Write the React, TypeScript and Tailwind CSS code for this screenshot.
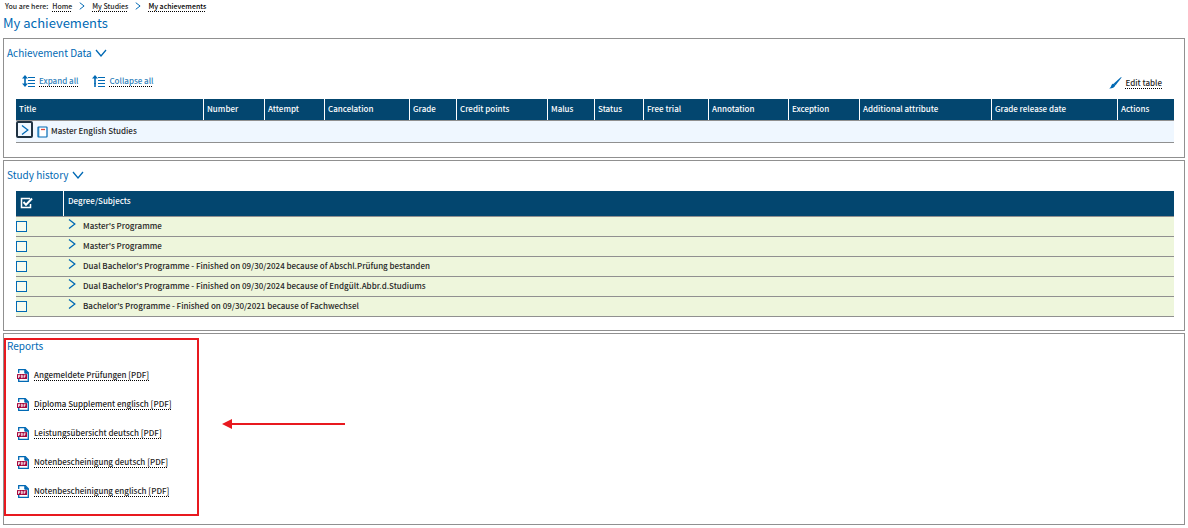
import type { ReactNode } from 'react'

const columns = [
  { label: 'Title', width: 'w-[188px]' },
  { label: 'Number', width: 'w-[61px]' },
  { label: 'Attempt', width: 'w-[60px]' },
  { label: 'Cancelation', width: 'w-[85px]' },
  { label: 'Grade', width: 'w-[47px]' },
  { label: 'Credit points', width: 'w-[91px]' },
  { label: 'Malus', width: 'w-[47px]' },
  { label: 'Status', width: 'w-[49px]' },
  { label: 'Free trial', width: 'w-[65px]' },
  { label: 'Annotation', width: 'w-[80px]' },
  { label: 'Exception', width: 'w-[71px]' },
  { label: 'Additional attribute', width: 'w-[132px]' },
  { label: 'Grade release date', width: 'w-[126px]' },
  { label: 'Actions', width: '' },
]

const history = [
  "Master's Programme",
  "Master's Programme",
  "Dual Bachelor's Programme - Finished on 09/30/2024 because of Abschl.Prüfung bestanden",
  "Dual Bachelor's Programme - Finished on 09/30/2024 because of Endgült.Abbr.d.Studiums",
  "Bachelor's Programme - Finished on 09/30/2021 because of Fachwechsel",
]

const reports = [
  'Angemeldete Prüfungen [PDF]',
  'Diploma Supplement englisch [PDF]',
  'Leistungsübersicht deutsch [PDF]',
  'Notenbescheinigung deutsch [PDF]',
  'Notenbescheinigung englisch [PDF]',
]

const dotted = 'underline decoration-dotted decoration-1 decoration-black underline-offset-2'

function ChevronRight({ className }: { className?: string }) {
  return (
    <svg viewBox="0 0 8 10" className={className} fill="none" stroke="#0069b4" strokeWidth="1.3" aria-hidden="true">
      <path d="M1 .6 6.8 5 1 9.4" />
    </svg>
  )
}

function ChevronDown() {
  return (
    <svg viewBox="0 0 12 8" className="w-3 h-2" fill="none" stroke="#0069b4" strokeWidth="1.3" aria-hidden="true">
      <path d="M1 1 6 7 11 1" />
    </svg>
  )
}

function RowsIcon({ both }: { both?: boolean }) {
  return (
    <svg viewBox="0 0 14 12" className="w-3.5 h-3" fill="#0069b4" aria-hidden="true">
      <path d="M3 0 6 3.600H0z" />
      <path d="M2.200 3h1.600v6H2.200z" />
      {both ? <path d="M0 8.400h6L3 12z" /> : <path d="M2.200 8h1.600v4H2.200z" />}
      <path d="M6 2h7v1H6zM6 5h7v1H6zM6 8h7v1H6zM6 11h7v1H6z" />
    </svg>
  )
}

function BookIcon() {
  return (
    <svg viewBox="0 0 11 12" className="w-[11px] h-3" aria-hidden="true">
      <rect x="1" y="1" width="9" height="10" rx="0.5" fill="#fff" stroke="#0069b4" strokeWidth="1.2" />
      <path d="M1.800 1v10" stroke="#0069b4" strokeWidth="0.800" />
      <path d="M4 3.500h4" stroke="#e2433a" strokeWidth="1.300" />
    </svg>
  )
}

function BrushIcon() {
  return (
    <svg viewBox="0 0 13 12" className="w-[13px] h-3" fill="#0069b4" aria-hidden="true">
      <path d="M12.800.2H11.800L4.800 6.400l1.800 1.800z" />
      <path d="M4.500 6.700c1.100.1 1.900.9 1.800 1.900C5.600 10.800 3 11.600.2 11.500c1.500-.7 1.800-1.900 2.200-3.200.4-1 1.100-1.700 2.100-1.600z" />
    </svg>
  )
}

function PdfIcon() {
  return (
    <svg viewBox="0 0 12 13" className="w-3 h-[13px]" aria-hidden="true">
      <path d="M1.700 4V.7h6.600l3 3v8.600H1.700V10" fill="#fff" stroke="#0069b4" strokeWidth="1.300" />
      <path d="M7.800.7v3.500h3.500" fill="#0069b4" stroke="#0069b4" />
      <rect y="5" width="10" height="5" rx="0.500" fill="#a5063c" />
      <path
        d="M1.500 9V6.200h1.200v1.500H1.500M4.400 6.200v2.500h.8l.5-.5V6.700l-.5-.5zM7.200 9V6.200h1.500M7.200 7.600h1.200"
        fill="none"
        stroke="#fff"
        strokeWidth="0.800"
      />
    </svg>
  )
}

function Panel({ className, children }: { className?: string; children: ReactNode }) {
  return <section className={`border border-[#909090] ${className}`}>{children}</section>
}

function PanelTitle({ children }: { children: ReactNode }) {
  return (
    <h2 className="text-[10px] leading-4 text-[#0069b4] font-normal">
      <button type="button" className="flex items-center gap-[3px]">
        {children}
        <ChevronDown />
      </button>
    </h2>
  )
}

export default function App() {
  return (
    <main className="bg-white px-[3px] font-['Noto_Sans_CJK_SC','Source_Sans_Pro',sans-serif] text-[8px] leading-3 font-medium text-[#262626]">
      <nav aria-label="Breadcrumb" className="flex items-center pl-0.5 h-3 text-[7px]">
        <span className="mr-1">You are here:</span>
        <a href="#home" className={dotted}>Home</a>
        <ChevronRight className="w-1.5 h-2 mx-[7px]" />
        <a href="#studies" className={dotted}>My Studies</a>
        <ChevronRight className="w-1.5 h-2 mx-[7px]" />
        <a href="#achievements" aria-current="page" className={`${dotted} text-black`}>My achievements</a>
      </nav>
      <h1 className="h-[26px] pt-0.5 text-[13px] leading-[18px] font-normal text-[#0069b4]">My achievements</h1>

      <div className="flex flex-col gap-0.5">
        <Panel className="pt-1.5 pb-3.5">
          <div className="pl-[3px]">
            <PanelTitle>Achievement Data</PanelTitle>
          </div>
          <div className="flex items-center gap-3.5 h-6 mt-2 pl-[18px] pr-[22px] mb-1.5">
            <button type="button" className="flex items-center gap-[3px] text-[#2f7fbb]">
              <RowsIcon both />
              <span className={dotted}>Expand all</span>
            </button>
            <button type="button" className="flex items-center gap-[3px] text-[#2f7fbb]">
              <RowsIcon />
              <span className={dotted}>Collapse all</span>
            </button>
            <button type="button" className="flex items-center gap-[3px] pt-1 ml-auto">
              <BrushIcon />
              <span className={dotted}>Edit table</span>
            </button>
          </div>
          <div className="pl-3 pr-2.5">
            <table className="w-full table-fixed border-separate border-spacing-0 text-left">
              <thead>
                <tr className="bg-[#03466f] text-white">
                  {columns.map(({ label, width }) => (
                    <th
                      key={label}
                      className={`${width} h-[22px] p-0 border-b border-b-[#909090] font-medium whitespace-nowrap group`}
                    >
                      <div className="flex items-center h-[21px] pl-[3px] pb-0.5 border-r border-white group-last:border-r-0">
                        {label}
                      </div>
                    </th>
                  ))}
                </tr>
              </thead>
              <tbody>
                <tr className="bg-[#eff7ff]">
                  <td colSpan={columns.length} className="h-[22px] p-0 border-b border-[#909090]">
                    <div className="flex items-center h-[21px] pb-0.5">
                      <button
                        type="button"
                        aria-label="Expand Master English Studies"
                        className="flex items-center justify-center w-[17px] h-[17px] mb-0.5 border-2 border-[#1f3242] rounded-xs"
                      >
                        <ChevronRight className="w-2 h-2.5" />
                      </button>
                      <span className="ml-1 mr-[3px] mt-0.5">
                        <BookIcon />
                      </span>
                      Master English Studies
                    </div>
                  </td>
                </tr>
              </tbody>
            </table>
          </div>
        </Panel>

        <Panel className="pt-1.5 pb-[13px]">
          <div className="pl-[3px] mb-2">
            <PanelTitle>Study history</PanelTitle>
          </div>
          <div className="pl-3 pr-2.5">
            <table className="w-full table-fixed border-separate border-spacing-0 text-left">
              <thead>
                <tr className="bg-[#03466f] text-white">
                  <th className="w-12 h-[26px] p-0 border-b border-[#909090]">
                    <label className="flex items-center h-[25px] pl-1 pb-0.5 border-r border-white">
                      <input type="checkbox" defaultChecked aria-label="Select all" className="sr-only" />
                      <svg viewBox="0 0 13 12" className="w-[13px] h-3" fill="none" stroke="#fff" aria-hidden="true">
                        <path d="M10 1.500H1.500v9h9V7" strokeWidth="1.500" />
                        <path d="M3.500 5 6 7.800 12 1.500" strokeWidth="2" />
                      </svg>
                    </label>
                  </th>
                  <th className="h-[26px] p-0 pl-1 pb-1.5 border-b border-[#909090] font-medium">Degree/Subjects</th>
                </tr>
              </thead>
              <tbody>
                {history.map((title, i) => (
                  <tr key={i} className="bg-[#eef6dc]">
                    <td className="h-5 p-0 border-b border-[#909090]">
                      <input
                        type="checkbox"
                        aria-label={title}
                        className="block appearance-none w-[11px] h-[11px] border border-[#0069b4] bg-white/50"
                      />
                    </td>
                    <td className="h-5 p-0 pl-1 pb-px border-b border-[#909090]">
                      <div className="flex items-center gap-[7px]">
                        <button type="button" aria-label={`Expand ${title}`} className="mb-1">
                          <ChevronRight className="w-2 h-2.5" />
                        </button>
                        {title}
                      </div>
                    </td>
                  </tr>
                ))}
              </tbody>
            </table>
          </div>
        </Panel>

        <Panel className="relative pt-1 pl-[3px] pb-[27px]">
          <h2 className="text-[10px] leading-4 font-normal text-[#0069b4]">Reports</h2>
          <ul className="flex flex-col gap-[17px] mt-[15px] pl-2.5">
            {reports.map((report) => (
              <li key={report} className="flex items-center gap-[5px] h-3">
                <PdfIcon />
                <a href="#report" className={dotted}>{report}</a>
              </li>
            ))}
          </ul>
          {/* highlight around the reports list */}
          <div className="absolute left-0 top-1 w-[195px] h-[178px] border-2 border-[#e8191f] pointer-events-none" />
          <svg viewBox="0 0 123 10" className="absolute left-[218px] top-[85px] w-[123px] h-2.5" aria-hidden="true">
            <path d="M8 5h115" stroke="#e8191f" strokeWidth="2" />
            <path d="M0 5 10 0v10z" fill="#e8191f" />
          </svg>
        </Panel>
      </div>
    </main>
  )
}
